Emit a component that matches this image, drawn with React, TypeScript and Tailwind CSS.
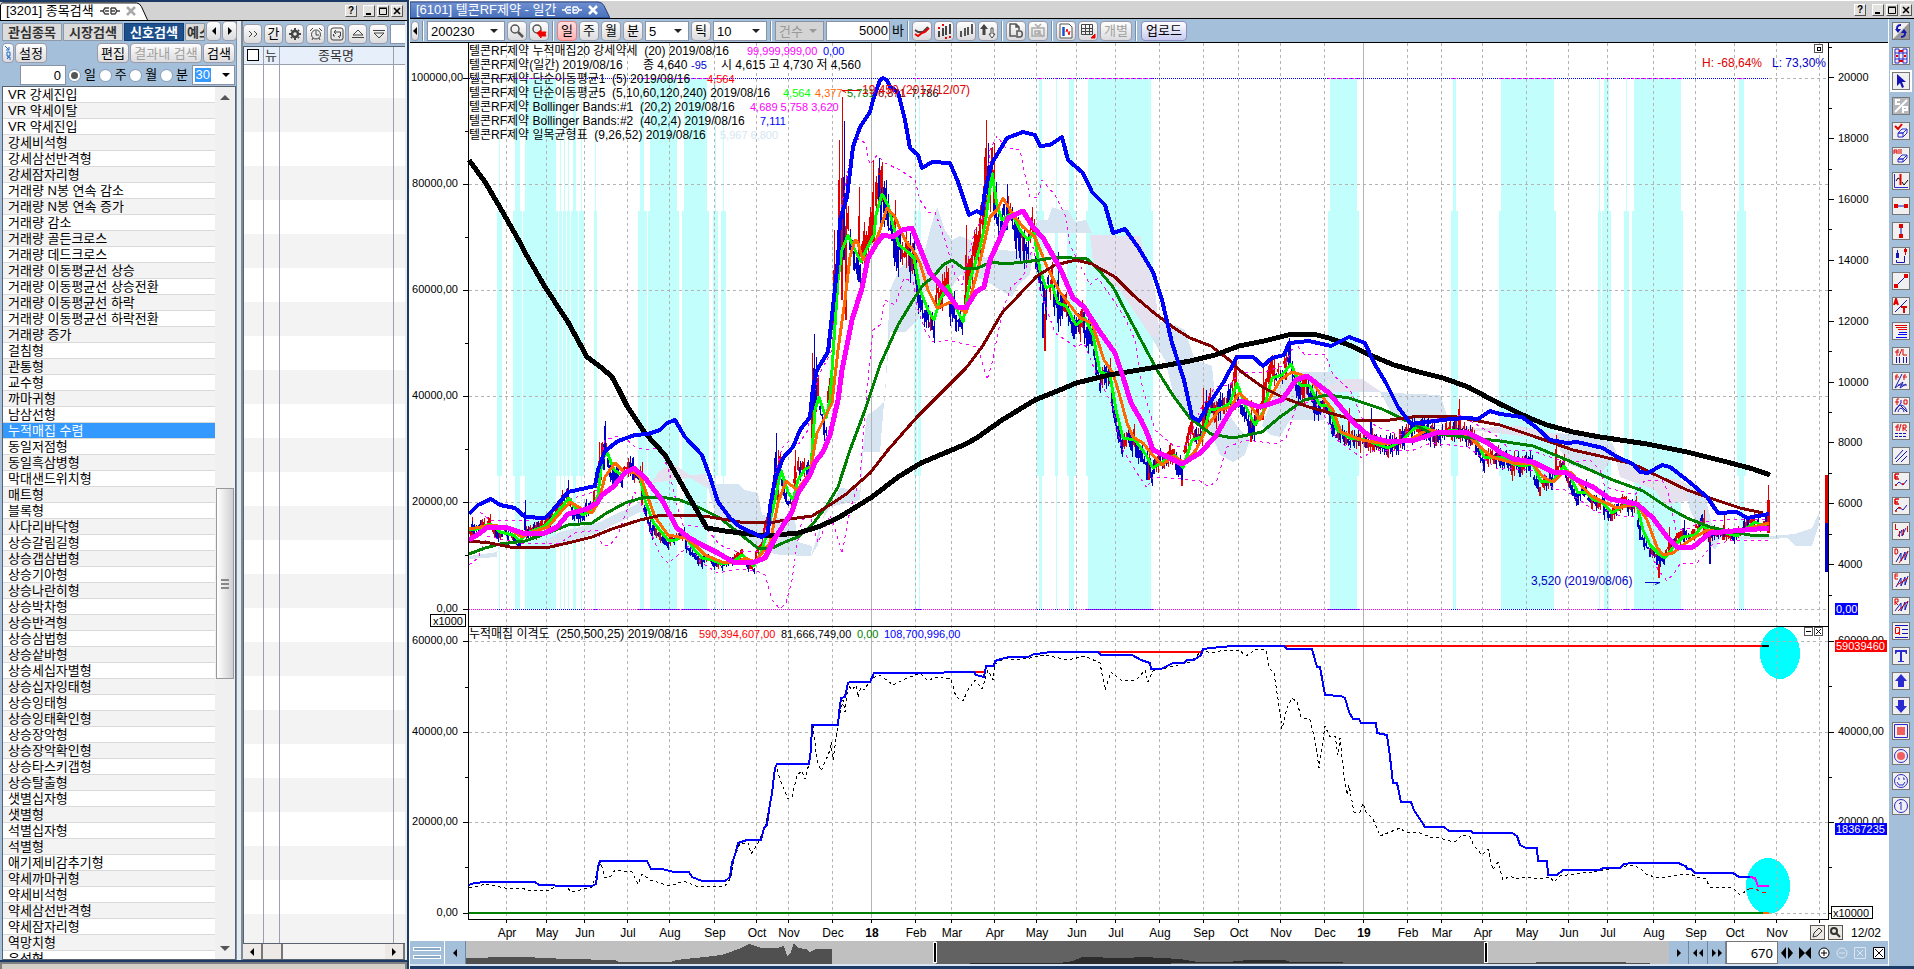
import type { ReactNode } from 'react'

const FONT = "font-['Liberation_Sans','Noto_Sans_CJK_KR',sans-serif]"

const SIGNALS = [
  'VR 강세진입', 'VR 약세이탈', 'VR 약세진입', '강세비석형', '강세삼선반격형', '강세잠자리형',
  '거래량 N봉 연속 감소', '거래량 N봉 연속 증가', '거래량 감소', '거래량 골든크로스', '거래량 데드크로스',
  '거래량 이동평균선 상승', '거래량 이동평균선 상승전환', '거래량 이동평균선 하락', '거래량 이동평균선 하락전환',
  '거래량 증가', '걸침형', '관통형', '교수형', '까마귀형', '남삼선형', '누적매집 수렴', '동일저점형',
  '동일흑삼병형', '막대샌드위치형', '매트형', '블록형', '사다리바닥형', '상승갈림길형', '상승갭삼법형',
  '상승기아형', '상승나란히형', '상승박차형', '상승반격형', '상승삼법형', '상승샅바형', '상승세십자별형',
  '상승십자잉태형', '상승잉태형', '상승잉태확인형', '상승장악형', '상승장악확인형', '상승타스키갭형',
  '상승탈출형', '샛별십자형', '샛별형', '석별십자형', '석별형', '애기제비감추기형', '약세까마귀형',
  '약세비석형', '약세삼선반격형', '약세잠자리형', '역망치형', '유성형',
]

const MONTHS: [number, string][] = [
  [506, 'Apr'], [546, 'May'], [584, 'Jun'], [627, 'Jul'], [669, 'Aug'], [714, 'Sep'], [756, 'Oct'], [788, 'Nov'],
  [832, 'Dec'], [871, '18'], [915, 'Feb'], [951, 'Mar'], [994, 'Apr'], [1036, 'May'], [1076, 'Jun'], [1115, 'Jul'],
  [1159, 'Aug'], [1203, 'Sep'], [1238, 'Oct'], [1280, 'Nov'], [1324, 'Dec'], [1363, '19'], [1407, 'Feb'],
  [1441, 'Mar'], [1482, 'Apr'], [1526, 'May'], [1568, 'Jun'], [1607, 'Jul'], [1653, 'Aug'], [1695, 'Sep'],
  [1734, 'Oct'], [1776, 'Nov'], [1819, ''],
]

// signal zones: narrow start, narrow end, wide start, wide end
const ZONES = [
  [499, 500, 497, 502], [515, 520, 513, 522], [525, 556, 523, 558], [560, 561, 559, 562], [564, 565, 563, 566],
  [568, 569, 567, 570], [573, 576, 571, 578], [581, 582, 579, 584], [595, 596, 594, 597], [640, 644, 638, 647],
  [650, 677, 648, 679], [684, 707, 682, 709], [715, 716, 713, 718], [723, 724, 721, 726], [915, 916, 914, 917],
  [919, 920, 918, 921], [1039, 1042, 1037, 1044], [1056, 1057, 1055, 1058], [1069, 1074, 1067, 1076],
  [1088, 1151, 1086, 1153], [1330, 1357, 1328, 1359], [1453, 1456, 1451, 1458], [1501, 1554, 1499, 1556],
  [1599, 1600, 1598, 1601], [1604, 1609, 1602, 1611], [1626, 1627, 1624, 1629], [1634, 1681, 1632, 1683],
  [1739, 1744, 1737, 1746],
]

const CLOUD_UP = [
  '469,556 497,552 500,546 540,543 560,532 600,522 645,500 646,512 640,512 597,533 560,545 520,544 498,547 497,557 469,559',
  '706,480 715,484 738,484 745,490 758,493 762,515 795,520 798,542 812,546 811,556 780,555 757,550 735,530 715,513',
  '811,556 818,545 822,520 832,505 840,488 860,490 862,455 867,415 875,410 885,400 888,330 890,290 900,268 915,255 925,250 930,230 937,207 945,230 952,240 960,236 975,242 985,258 1000,250 1033,252 1030,275 1018,285 1012,297 1000,290 985,280 960,275 950,290 925,290 918,320 905,332 890,332 885,390 880,452 863,452 860,500 838,505 826,508',
  '1037,220 1048,220 1052,207 1060,210 1068,210 1075,222 1086,220 1092,233 1036,233',
  '1150,335 1160,322 1175,325 1185,330 1195,360 1212,366 1215,395 1240,430 1250,440 1245,455 1233,462 1220,455 1210,430 1195,420 1175,400 1165,360',
  '1280,380 1300,372 1330,372 1345,382 1370,390 1392,393 1440,395 1448,418 1400,422 1390,410 1380,392 1330,392 1325,420 1290,420 1280,437 1270,435 1262,425',
  '1555,433 1585,435 1612,443 1615,455 1600,475 1570,465 1560,450',
  '1683,482 1705,495 1712,525 1722,535 1715,550 1705,540 1690,510',
  '1715,537 1770,536 1795,534 1812,528 1819,513 1819,525 1812,546 1795,546 1788,538 1770,539 1716,539',
]

const CLOUD_DOWN = [
  '652,483 658,472 672,463 690,475 706,474 708,488 690,478',
  '1090,235 1140,236 1145,255 1155,290 1160,337 1150,335 1120,290 1100,275 1093,262',
  '1328,386 1345,379 1362,379 1380,391 1328,392',
  '1420,424 1480,428 1520,426 1555,434 1560,445 1530,437 1480,431',
  '1612,443 1620,460 1655,476 1684,481 1690,500 1665,505 1655,490 1620,477',
]

const MA240 = '469,160 485,182 498,204 518,239 527,256 545,287 568,322 587,357 602,368 612,377 618,388 627,406 645,433 665,455 685,490 707,528 725,531 765,536 798,533 818,527 838,518 872,497 898,477 921,463 966,444 978,437 1002,420 1035,400 1060,390 1076,383 1109,375 1157,367 1190,361 1215,355 1239,346 1264,341 1288,335 1313,334 1329,338 1349,345 1370,355 1394,365 1419,372 1443,378 1468,387 1500,404 1527,417 1547,425 1573,432 1600,437 1647,444 1687,452 1727,462 1753,469 1770,475'
const MA120 = '469,541 490,543 510,547 530,548 550,547 572,542 592,537 612,529 640,520 662,515 685,515 710,517 740,522 770,523 790,519 812,516 825,508 845,495 870,473 888,450 917,417 966,368 982,347 1002,313 1019,295 1037,276 1055,265 1076,260 1092,264 1115,277 1133,295 1153,312 1174,328 1190,338 1211,346 1227,358 1243,373 1264,388 1284,398 1309,407 1337,415 1358,421 1390,420 1419,416 1451,416 1500,425 1527,434 1553,443 1573,450 1600,456 1633,464 1660,477 1687,490 1713,499 1740,508 1763,513'
const MA60 = '469,554 485,548 500,544 525,541 548,533 568,525 592,523 605,514 625,503 645,497 660,497 680,500 700,508 720,518 735,530 750,542 758,548 770,549 785,542 798,537 812,525 826,507 838,487 850,450 865,410 880,365 898,325 915,297 923,285 933,277 943,265 952,260 963,268 975,269 992,262 1005,264 1023,262 1040,260 1057,257 1087,259 1097,268 1113,287 1125,310 1141,340 1157,370 1174,397 1190,418 1211,434 1233,438 1262,432 1280,417 1304,400 1327,395 1349,398 1382,409 1411,423 1431,433 1464,437 1500,441 1533,446 1560,457 1583,467 1613,480 1643,491 1667,507 1687,518 1710,527 1733,532 1750,535 1769,535'
const BB40 = '469,514 478,505 491,499 500,505 515,508 525,517 545,518 553,510 568,492 595,486 598,470 605,451 618,441 635,435 648,434 660,430 667,423 675,420 685,437 702,455 710,477 718,502 730,518 740,527 762,537 768,533 770,507 775,480 783,458 793,447 800,430 810,417 813,387 817,370 828,352 833,307 838,260 840,220 847,197 853,147 860,127 870,112 873,100 880,80 883,78 887,80 890,87 898,92 905,120 910,148 918,155 922,168 932,162 950,163 958,182 969,215 977,211 982,214 985,190 992,163 1007,138 1023,132 1035,135 1040,146 1050,145 1062,137 1068,160 1083,173 1092,192 1105,205 1113,233 1125,229 1138,247 1153,272 1162,300 1172,343 1184,380 1192,417 1199,421 1207,407 1223,383 1237,357 1253,357 1263,366 1272,358 1284,355 1289,343 1309,341 1331,346 1349,337 1365,343 1374,363 1386,383 1398,407 1411,424 1451,419 1468,418 1478,419 1490,411 1500,414 1522,417 1537,428 1550,440 1567,443 1577,442 1603,448 1617,457 1633,464 1640,472 1648,473 1662,465 1670,467 1687,480 1707,497 1718,513 1737,512 1747,518 1769,514'
const MA20 = '469,540 477,535 488,527 508,528 522,533 545,533 557,527 568,514 587,509 597,503 602,495 613,487 625,473 634,468 645,478 662,500 677,528 688,537 702,545 718,553 733,562 755,562 765,558 775,538 792,512 798,493 810,475 815,462 823,452 830,435 838,400 842,370 852,320 862,288 868,258 877,243 883,235 893,237 902,230 912,228 920,248 930,273 949,295 957,307 966,308 976,292 984,287 990,260 1000,238 1008,218 1023,211 1033,227 1043,238 1060,268 1073,298 1084,307 1100,332 1115,353 1123,377 1131,403 1141,420 1147,433 1153,450 1166,456 1182,464 1200,453 1215,437 1231,410 1241,401 1260,407 1282,400 1296,380 1307,376 1329,393 1353,422 1370,437 1390,442 1415,440 1439,432 1468,433 1488,443 1500,452 1513,459 1533,462 1553,472 1567,473 1577,480 1593,487 1610,499 1637,504 1653,518 1667,537 1677,547 1693,547 1710,533 1733,531 1769,528'
const MA10 = '469,529 492,525 508,528 522,537 535,531 548,527 560,513 570,502 582,509 592,513 598,503 605,477 615,463 625,473 635,472 642,480 648,498 655,517 668,535 685,538 695,545 705,555 722,562 735,563 745,558 755,562 770,543 778,503 786,481 797,490 810,473 817,433 832,403 838,350 845,300 850,257 855,240 858,243 863,260 872,252 880,230 887,208 895,217 905,240 913,250 920,263 928,290 937,308 951,302 966,313 976,277 982,253 990,217 997,210 1003,198 1012,213 1023,227 1035,237 1047,267 1060,292 1072,308 1080,318 1092,323 1104,360 1113,373 1119,393 1127,423 1133,437 1143,443 1151,453 1162,465 1174,456 1184,463 1196,450 1207,427 1219,410 1231,407 1239,393 1247,400 1260,420 1270,398 1280,380 1292,372 1309,377 1321,395 1333,410 1341,432 1362,440 1386,444 1411,439 1427,430 1443,432 1468,435 1480,447 1492,457 1513,463 1533,464 1543,477 1553,482 1565,471 1572,473 1582,487 1593,497 1617,508 1637,504 1647,520 1657,547 1663,555 1673,553 1687,542 1707,530 1733,533 1753,527 1769,523'
const MA5 = '469,530 477,529 490,524 500,532 513,535 520,541 527,533 545,526 555,515 569,498 575,508 583,515 592,510 598,495 602,460 607,452 614,470 622,475 633,468 640,476 645,500 653,522 668,540 675,540 685,536 693,548 702,558 712,560 722,564 733,562 742,555 754,566 762,550 768,530 775,500 781,470 788,492 793,500 798,480 805,469 811,467 815,410 819,397 826,418 830,400 834,340 838,280 842,250 848,235 855,250 861,262 866,250 874,235 876,215 882,194 888,205 893,225 899,245 908,252 914,258 920,290 928,310 934,320 940,300 948,285 957,310 963,322 970,280 980,247 985,225 992,173 997,205 1002,220 1012,213 1020,230 1028,240 1034,233 1040,270 1046,288 1052,285 1058,303 1066,306 1076,325 1085,318 1093,335 1100,372 1110,375 1116,410 1123,438 1135,440 1146,455 1153,468 1165,460 1175,455 1183,468 1192,440 1202,437 1210,410 1222,408 1230,403 1237,383 1245,405 1255,425 1263,412 1272,378 1282,375 1291,364 1300,385 1309,385 1320,405 1328,405 1337,430 1350,438 1365,440 1388,448 1400,442 1415,428 1425,427 1440,435 1450,430 1465,432 1475,437 1484,457 1493,457 1507,458 1513,464 1523,466 1533,464 1541,482 1553,481 1564,466 1571,478 1578,493 1586,492 1594,500 1602,502 1612,513 1625,505 1637,505 1643,530 1650,545 1660,555 1665,558 1675,545 1683,537 1695,535 1703,525 1710,532 1722,532 1737,536 1747,528 1755,522 1763,526 1769,523'
const BB20_UP = '480,512 490,520 525,521 548,516 568,500 590,493 597,490 605,440 618,436 625,438 635,447 645,450 655,448 662,452 670,475 677,505 683,525 705,527 720,545 735,551 760,552 768,520 775,475 782,448 790,440 798,445 808,430 812,400 820,373 832,350 840,215 850,160 857,138 865,143 870,165 877,155 885,163 900,170 915,180 920,200 928,212 935,212 945,240 955,275 962,285 975,230 985,215 990,150 997,136 1005,147 1020,150 1025,175 1030,197 1038,198 1042,180 1055,195 1065,215 1070,245 1080,265 1090,285 1098,278 1112,298 1125,318 1135,340 1142,385 1155,430 1175,447 1187,445 1200,410 1215,387 1230,385 1240,372 1265,372 1285,365 1295,343 1305,355 1325,354 1333,375 1350,390 1362,418 1380,428 1400,435 1430,420 1460,415 1500,438 1510,451 1530,450 1567,463 1590,460 1600,470 1605,487 1635,495 1645,480 1662,480 1668,492 1676,530 1690,528 1700,522 1725,520 1769,519'
const BB20_DN = '469,565 478,558 487,536 520,543 560,543 575,533 597,530 602,545 610,545 618,535 625,515 635,492 640,500 650,530 660,555 668,563 678,555 690,545 700,562 718,573 740,569 757,571 765,575 772,600 780,609 786,603 792,580 797,545 802,520 810,515 818,543 830,515 836,532 842,554 850,510 860,478 866,400 873,330 880,325 885,300 895,305 904,278 913,282 917,307 925,330 933,342 949,340 955,342 978,347 987,380 992,363 1002,313 1011,287 1023,277 1033,247 1040,290 1055,333 1076,347 1084,343 1096,373 1113,407 1121,447 1137,473 1147,488 1153,477 1182,479 1200,481 1209,487 1217,480 1227,447 1247,440 1276,444 1286,438 1296,407 1313,400 1325,417 1337,440 1362,458 1374,450 1411,451 1431,443 1468,447 1496,468 1530,470 1545,475 1553,489 1565,490 1580,500 1597,513 1610,510 1620,516 1640,516 1650,550 1658,570 1667,581 1675,572 1680,564 1697,563 1712,545 1730,541 1769,540'

const GAP_HIGH = '469,885 474,883 486,882 535,882 539,885 571,886 592,886 596,884 598,867 600,861 647,861 651,869 662,869 674,872 689,872 692,877 702,881 725,881 730,877 732,863 735,855 738,843 747,840 761,840 764,828 767,825 769,810 772,793 775,768 777,764 809,764 811,750 812,725 838,725 839,713 841,698 845,697 848,683 850,682 870,682 874,673 915,673 974,672 976,675 984,677 986,666 994,666 995,661 1001,659 1009,657 1028,657 1034,654 1046,653 1048,652 1098,652 1101,655 1132,655 1141,660 1150,663 1151,669 1161,669 1173,663 1184,663 1187,660 1194,660 1201,655 1203,649 1221,647 1234,646 1284,646 1287,649 1312,649 1317,667 1320,667 1325,695 1341,696 1345,698 1349,712 1353,719 1359,719 1361,723 1376,723 1377,733 1387,735 1390,757 1393,783 1397,783 1401,802 1411,802 1414,810 1425,827 1444,827 1449,831 1471,831 1473,833 1512,833 1517,836 1520,845 1526,848 1537,848 1538,861 1547,861 1548,875 1557,875 1563,870 1600,870 1603,868 1620,868 1624,864 1633,863 1679,863 1682,865 1686,866 1687,869 1691,869 1695,873 1733,873 1739,877 1750,877'
const GAP_RAW = '469,888 475,887 485,884 495,886 505,888 522,888 527,890 547,891 555,887 565,886 572,892 580,890 592,887 598,870 601,863 605,878 611,876 615,870 632,872 638,884 642,874 650,880 670,886 684,881 698,887 725,886 731,878 735,856 740,843 748,843 751,854 757,845 764,830 770,805 776,766 781,782 788,799 792,797 797,775 802,771 805,779 810,760 813,726 817,760 821,771 826,760 830,750 831,742 833,760 838,725 843,700 845,712 848,685 852,690 856,685 858,697 861,687 864,690 872,678 880,675 893,685 905,679 920,673 928,681 935,677 951,679 956,697 963,701 968,690 975,680 982,689 988,670 993,680 995,664 1005,658 1012,660 1030,658 1045,655 1068,660 1085,656 1100,663 1105,690 1111,672 1122,681 1136,680 1145,670 1148,682 1153,671 1170,667 1190,662 1203,650 1210,653 1225,650 1239,650 1246,656 1257,649 1266,650 1269,668 1274,673 1280,712 1282,729 1287,708 1292,698 1297,702 1301,717 1310,720 1315,740 1319,768 1325,726 1330,737 1335,736 1338,755 1340,738 1344,775 1347,795 1349,785 1354,812 1360,812 1363,803 1366,812 1373,819 1380,836 1400,828 1405,832 1420,833 1430,837 1440,838 1450,841 1456,841 1462,835 1470,837 1474,846 1482,855 1488,849 1493,870 1498,862 1503,880 1510,876 1516,879 1527,877 1538,879 1550,877 1554,882 1560,876 1575,874 1600,871 1620,867 1632,865 1640,868 1646,874 1657,878 1680,875 1690,874 1700,878 1705,878 1710,887 1733,888 1740,895 1749,889'

// x, high, low, up?
const SPIKES: [number, number, number, boolean][] = [
  [525, 500, 530, false], [472, 517, 535, true], [568, 480, 500, false], [605, 421, 452, false], [604, 426, 470, false],
  [599, 442, 490, true], [601, 445, 480, true], [633, 457, 480, false], [642, 462, 505, true], [774, 458, 500, false],
  [776, 433, 480, false], [778, 450, 500, true], [812, 353, 440, true], [814, 334, 420, false], [816, 357, 410, false],
  [795, 450, 490, true], [834, 230, 330, true], [839, 140, 240, true], [842, 97, 300, true], [844, 121, 260, false],
  [846, 175, 320, true], [859, 187, 260, true], [873, 160, 240, true], [879, 158, 200, false], [881, 170, 230, false],
  [886, 180, 220, false], [895, 200, 250, true], [966, 225, 300, true], [984, 157, 230, true], [986, 120, 190, true],
  [988, 143, 200, false], [994, 143, 210, true], [1007, 184, 230, false], [1043, 280, 338, false], [1045, 290, 351, true],
  [1058, 252, 323, false], [1147, 450, 480, false], [1149, 445, 480, true], [1180, 455, 475, false], [1182, 460, 486, true],
  [1203, 388, 430, true], [1206, 390, 420, false], [1235, 355, 410, true], [1251, 400, 442, true], [1263, 365, 420, true],
  [1286, 345, 380, true], [1289, 338, 365, false], [1371, 408, 440, false], [1349, 408, 440, true], [1459, 399, 425, true],
  [1556, 435, 470, true], [1520, 460, 477, false], [1604, 490, 510, false], [1612, 505, 521, true], [1640, 515, 540, false],
  [1657, 550, 565, false], [1659, 555, 578, true], [1669, 527, 550, true], [1684, 520, 540, false], [1704, 510, 530, true],
  [1710, 528, 564, false], [1724, 515, 540, true],
]

function parse(points: string) {
  return points.split(' ').map(p => p.split(',').map(Number))
}

// daily bars spread round the five day average
function buildBars() {
  const pts = parse(MA5)
  let seed = 7
  const rnd = () => {
    seed = (seed * 16807) % 2147483647
    return seed / 2147483647
  }
  const out = { upWick: '', upBody: '', dnWick: '', dnBody: '' }
  let k = 0
  for (let x = 470; x < 1768; x += 2) {
    while (k < pts.length - 2 && pts[k + 1][0] < x) k++
    const [x0, y0] = pts[k]
    const [x1, y1] = pts[k + 1]
    const slope = (y1 - y0) / (x1 - x0)
    const lead = Math.max(-12, Math.min(12, slope * 4))
    const y = y0 + slope * (x - x0) + lead
    const amp = 2 + (609 - y) * 0.04
    const up = slope * 0.5 + (rnd() - 0.5) * 2.4 < 0
    const mid = y + (rnd() - 0.5) * amp
    const body = 1 + rnd() * amp * 0.8
    const top = Math.round(mid - body)
    const bottom = Math.round(mid + body)
    const hi = Math.round(top - rnd() * amp * 0.8)
    const lo = Math.round(bottom + rnd() * amp * 0.8)
    if (up) {
      out.upWick += `M${x}.5 ${hi}V${lo}`
      out.upBody += `M${x} ${top}V${bottom}`
    } else {
      out.dnWick += `M${x}.5 ${hi}V${lo}`
      out.dnBody += `M${x} ${top}V${bottom}`
    }
  }
  SPIKES.forEach(([x, hi, lo, up]) => {
    const third = Math.round(hi + (lo - hi) * 0.4)
    if (up) {
      out.upWick += `M${x}.5 ${hi}V${lo}`
      out.upBody += `M${x} ${third}V${lo}`
    } else {
      out.dnWick += `M${x}.5 ${hi}V${lo}`
      out.dnBody += `M${x} ${third}V${lo}`
    }
  })
  return out
}

const BARS = buildBars()

type Seg = [number, string, string]

const LEGEND: Seg[][] = [
  [[469, '#000', '텔콘RF제약 누적매집20 강세약세  (20) 2019/08/16'], [747, '#f0f', '99,999,999,00'], [823, '#00f', '0,00']],
  [[469, '#000', '텔콘RF제약(일간) 2019/08/16'], [643, '#000', '종 4,640'], [691, '#0000d8', '-95'], [721, '#000', '시 4,615 고 4,730 저 4,560']],
  [[469, '#000', '텔콘RF제약 단순이동평균1  (5) 2019/08/16'], [707, '#f00', '4,564']],
  [[469, '#000', '텔콘RF제약 단순이동평균5  (5,10,60,120,240) 2019/08/16'], [783, '#0f0', '4,564'], [815, '#ff6600', '4,377'], [847, '#008000', '5,731'], [878, '#800000', '6,871'], [911, '#000', '7,786']],
  [[469, '#000', '텔콘RF제약 Bollinger Bands:#1  (20,2) 2019/08/16'], [750, '#f0f', '4,689 5,758 3,620']],
  [[469, '#000', '텔콘RF제약 Bollinger Bands:#2  (40,2,4) 2019/08/16'], [760, '#00f', '7,111']],
  [[469, '#000', '텔콘RF제약 일목균형표  (9,26,52) 2019/08/16'], [720, '#d6e6f2', '5,967 6,800']],
]

const LEGEND2: Seg[] = [
  [469, '#000', '누적매집 이격도  (250,500,25) 2019/08/16'], [699, '#f00', '590,394,607,00'], [781, '#000', '81,666,749,00'],
  [857, '#008000', '0,00'], [884, '#00f', '108,700,996,00'],
]

const LEFT_AXIS: [number, string][] = [
  [78, '100000,00'], [184, '80000,00'], [290, '60000,00'], [396, '40000,00'], [502, '20000,00'], [609, '0,00'],
]
const LOWER_AXIS: [number, string][] = [[641, '60000,00'], [732, '40000,00'], [822, '20000,00'], [913, '0,00']]
const RIGHT_AXIS: [number, string][] = [
  [77, '20000'], [138, '18000'], [199, '16000'], [260, '14000'], [321, '12000'], [382, '10000'], [442, '8000'],
  [503, '6000'], [564, '4000'],
]

// names are set a size larger than the bare values
function LegendText({ seg: [x, fill, t], y }: { seg: Seg; y: number }) {
  return <text x={x} y={y} fill={fill} fontSize={/[가-힣]/.test(t) ? 12 : 11} className="whitespace-pre">{t}</text>
}

function Chart() {
  return (
    <svg viewBox="410 43 1478 898" className={`block h-full w-full bg-white ${FONT}`} fontSize="11" role="img" aria-label="텔콘RF제약 일간 차트">
      <g shapeRendering="crispEdges">
        {ZONES.map(([a, b, c, d]) => (
          <g key={a} fill="#c2fffc">
            <rect x={a} y="79" width={b - a} height="530" />
            <rect x={c} y="211" width={d - c} height="265" />
          </g>
        ))}
        <g fill="#d6e5f1">
          {CLOUD_UP.map(p => <polygon key={p} points={p} />)}
        </g>
        <g fill="#e6e1ee">
          {CLOUD_DOWN.map(p => <polygon key={p} points={p} />)}
        </g>
        <ellipse cx="1780" cy="653" rx="20" ry="26" fill="#0ff" />
        <ellipse cx="1768" cy="886" rx="22" ry="28" fill="#0ff" />

        {/* Grid */}
        <g stroke="#b4b4b4" strokeDasharray="3 3">
          {MONTHS.map(([x, name]) => (
            <path key={x} d={`M${x}.5 43V918`} strokeDasharray={name === '18' || name === '19' ? 'none' : '3 3'} />
          ))}
          {[184, 290, 396, 502, 641, 732, 822].map(y => <path key={y} d={`M469 ${y}.5H1828`} />)}
          <path d="M1769 78.5H1828M1769 609.5H1828M1769 913.5H1828" />
        </g>
        <path d="M469 78.5H1769" stroke="#00f" strokeDasharray="1 1" />
        <path d="M469 609.5H1769" stroke="#f0f" strokeDasharray="1 1" />
        {ZONES.map(([a, , c, d]) => (
          <g key={a}>
            <path d={`M${c} 78.5H${d}`} stroke="#f0f" strokeDasharray="2 1" />
            <path d={`M${c} 609.5H${d}`} stroke="#00f" strokeDasharray="1 1" />
          </g>
        ))}

        {/* Price bars */}
        <g fill="none">
          <path d={BARS.upWick} stroke="#e00000" />
          <path d={BARS.dnWick} stroke="#0000c8" />
          <path d={BARS.upBody} stroke="#e00000" strokeWidth="2" />
          <path d={BARS.dnBody} stroke="#0000c8" strokeWidth="2" />
          <path d="M1768.5 485V533" stroke="#e00000" />
          <path d="M1768.5 500V533" stroke="#e00000" strokeWidth="3" />
        </g>

        {/* Averages and bands */}
        <g fill="none" strokeLinejoin="round">
          <polyline points={BB20_UP} stroke="#f0f" strokeDasharray="3 4" />
          <polyline points={BB20_DN} stroke="#f0f" strokeDasharray="3 4" />
          <polyline points={MA5} stroke="#0f0" strokeWidth="3" />
          <polyline points={MA10} stroke="#ff6a00" strokeWidth="3" />
          <polyline points={MA60} stroke="#008000" strokeWidth="3" />
          <polyline points={MA120} stroke="#800000" strokeWidth="3" />
          <polyline points={MA240} stroke="#000" strokeWidth="5" />
          <polyline points={BB40} stroke="#00f" strokeWidth="4" />
          <polyline points={MA20} stroke="#f0f" strokeWidth="5" />
        </g>

        {/* Accumulation panel */}
        <g fill="none">
          <polyline points={GAP_RAW} stroke="#000" strokeDasharray="3 3" />
          <polyline points="1749,889 1755,888 1760,892 1768,892" stroke="#f00" strokeDasharray="4 3" />
          <path d="M974 672H985M1098 652H1202M1284 646H1762" stroke="#f00" strokeWidth="2" />
          <path d="M1762 646H1769" stroke="#000" strokeWidth="2" />
          <polyline points={GAP_HIGH} stroke="#00f" strokeWidth="2" />
          <polyline points="1750,877 1755,878 1758,886 1769,886" stroke="#f0f" strokeWidth="2" />
          <path d="M469 913H1765" stroke="#008000" strokeWidth="2" />
          <path d="M1763 913H1769" stroke="#ff6a00" strokeWidth="2" />
        </g>

        {/* Frame and ticks */}
        <g stroke="#000" fill="none">
          <path d="M468.5 43V919.5H1828.5V43M468 626.5H1829" />
          {LEFT_AXIS.map(([y]) => <path key={y} d={`M463 ${y}.5H468`} />)}
          {LOWER_AXIS.map(([y]) => <path key={y} d={`M463 ${y}.5H468M1829 ${y}.5H1834`} />)}
          {[131, 237, 343, 449, 555, 687, 777, 867].map(y => <path key={y} d={`M465 ${y}.5H468`} />)}
          {RIGHT_AXIS.map(([y]) => <path key={y} d={`M1829 ${y}.5H1834`} />)}
          {[47, 108, 169, 229, 290, 351, 412, 473, 534, 595, 686, 777, 867].map(y => <path key={y} d={`M1829 ${y}.5H1832`} />)}
          {MONTHS.map(([x]) => <path key={x} d={`M${x}.5 919V923`} />)}
        </g>
        <path d="M1825 475h3v48h-3z" fill="#e00000" />
        <path d="M1825 523h3v49h-3z" fill="#0000c8" />
      </g>

      <g textAnchor="end">
        {LEFT_AXIS.map(([y, t]) => <text key={t} x={t.length > 8 ? 463 : 458} y={y + 3}>{t}</text>)}
        {LOWER_AXIS.map(([y, t]) => <text key={t} x="458" y={y + 3}>{t}</text>)}
      </g>
      {RIGHT_AXIS.map(([y, t]) => <text key={t} x="1838" y={y + 4}>{t}</text>)}
      {LOWER_AXIS.slice(0, 3).map(([y, t]) => <text key={t} x="1838" y={y + 3}>{t}</text>)}
      <g textAnchor="middle" fontSize="12">
        {MONTHS.map(([x, t]) => (
          <text key={x} x={x + 1} y="937" fontWeight={t === '18' || t === '19' ? 700 : 400}>{t}</text>
        ))}
      </g>
      <text x="1851" y="937" fontSize="12">12/02</text>

      {LEGEND.map((row, i) => row.map(seg => <LegendText key={seg[0]} seg={seg} y={55 + i * 14} />))}
      {LEGEND2.map(seg => <LegendText key={seg[0]} seg={seg} y={638} />)}
      <g fontSize="12">
        <text x="1702" y="67" fill="#e00000">H: -68,64%</text>
        <text x="1772" y="67" fill="#0000c8">L: 73,30%</text>
        <text x="862" y="94" fill="#e00000">19,450 (2017/12/07)</text>
        <text x="1531" y="585" fill="#0000c8">3,520 (2019/08/06)</text>
      </g>
      <path d="M842 90.5H860M842 90.5l4 2" stroke="#e00000" fill="none" />
      <path d="M1645 582.5H1660l-5 2" stroke="#0000c8" fill="none" />

      {/* Value tags */}
      <g fill="#fff">
        <rect x="1835" y="603" width="23" height="12" fill="#00f" />
        <text x="1836" y="613">0,00</text>
        <rect x="1835" y="640" width="52" height="12" fill="#f00" />
        <text x="1836" y="650">59039460</text>
        <rect x="1835" y="823" width="52" height="12" fill="#00f" />
        <text x="1836" y="833">18367235</text>
      </g>
      <g fill="#fff" stroke="#000" shapeRendering="crispEdges">
        <rect x="430.5" y="614.5" width="35" height="12" />
        <rect x="1831.5" y="906.5" width="41" height="12" />
      </g>
      <text x="433" y="625">x1000</text>
      <text x="1833" y="917">x10000</text>

      {/* Panel buttons */}
      <g fill="#fff" stroke="#555" shapeRendering="crispEdges">
        <rect x="1814.5" y="44.5" width="8" height="8" />
        <rect x="1817.5" y="47.5" width="3" height="3" stroke="#000" />
        <rect x="1804.5" y="627.5" width="8" height="8" />
        <path d="M1806 631.5h5" stroke="#000" />
        <rect x="1814.5" y="627.5" width="8" height="8" />
        <path d="M1816 629l5 5M1821 629l-5 5" stroke="#000" />
        <rect x="1810.5" y="925.5" width="14" height="14" fill="#ece9e4" />
        <rect x="1828.5" y="925.5" width="14" height="14" fill="#ece9e4" />
      </g>
      <path d="M1813 937l1-4 5-5 3 3-5 5z" fill="none" stroke="#333" />
      <circle cx="1834" cy="931" r="3" fill="none" stroke="#333" strokeWidth="2" />
      <path d="M1836 933l4 4" stroke="#333" strokeWidth="2" />
    </svg>
  )
}

const BTN = 'flex h-5 shrink-0 items-center justify-center rounded-sm border border-[#9a9aa8] bg-linear-to-b from-white via-[#ececec] to-[#dcdce0] leading-none disabled:text-[#a0a0a0]'

function Btn({ label, className = 'w-5', disabled, children }: { label?: string; className?: string; disabled?: boolean; children: ReactNode }) {
  return (
    <button type="button" aria-label={label} disabled={disabled} className={`${BTN} ${className}`}>
      {children}
    </button>
  )
}

function Combo({ label, value, className, disabled }: { label: string; value: string; className: string; disabled?: boolean }) {
  return (
    <div className={`relative flex h-5 shrink-0 items-center border border-[#8a93a5] ${disabled ? 'bg-[#d4d4d4]' : 'bg-white'} ${className}`}>
      <select aria-label={label} disabled={disabled} className={`h-full w-full appearance-none bg-transparent pl-[3px] outline-none ${disabled ? 'text-[#999]' : 'text-black'}`}>
        <option>{value}</option>
      </select>
      <svg viewBox="0 0 8 4" className={`pointer-events-none absolute right-1.5 h-1 w-2 ${disabled ? 'fill-[#999]' : 'fill-[#222]'}`}><path d="M0 0h8L4 4z" /></svg>
    </div>
  )
}

function Sep() {
  return <span className="mx-px h-5 w-0.5 shrink-0 border-r border-white bg-[#7d8ea3]" />
}

function LinkIcon({ color }: { color: string }) {
  return (
    <svg viewBox="0 0 20 10" className="h-2.5 w-5" fill="none" stroke={color} strokeWidth="1.4">
      <path d="M0 5h3M9 2H5L3 5l2 3h4M5 5h4M20 5h-3M11 2h4l2 3-2 3h-4M15 5h-4M11 2v6" />
    </svg>
  )
}

function WindowButtons() {
  const base = 'flex h-3 w-3 items-center justify-center border border-t-white border-l-white border-r-[#555] border-b-[#555] bg-[#e4e2de]'
  return (
    <div className="flex items-center gap-0.5">
      <button type="button" aria-label="도움말" className={`${base} mr-1 text-[10px] font-bold leading-none`}>?</button>
      <button type="button" aria-label="최소화" className={base}><svg viewBox="0 0 8 8" className="h-2 w-2"><path d="M1 6h5v2H1z" /></svg></button>
      <button type="button" aria-label="최대화" className={base}><svg viewBox="0 0 8 8" className="h-2 w-2" fill="none" stroke="#000"><path d="M.5 1.5h7v6h-7zM0 1h8" /></svg></button>
      <button type="button" aria-label="닫기" className={base}><svg viewBox="0 0 8 8" className="h-2 w-2" stroke="#000" strokeWidth="1.6"><path d="M1 1l6 6M7 1L1 7" /></svg></button>
    </div>
  )
}

function Tri({ dir }: { dir: 'left' | 'right' }) {
  return <svg viewBox="0 0 6 8" className="h-2 w-1.5"><path d={dir === 'left' ? 'M5 0v8L1 4z' : 'M1 0v8l4-4z'} /></svg>
}

function SearchPane() {
  return (
    <section className="flex w-[237px] shrink-0 flex-col border-r border-[#6e93b8] bg-[#a4bfd9] pl-0.5">
      <div className="flex h-[21px] items-end gap-px pb-px text-[13px] font-bold">
        <button type="button" className="h-[18px] w-[60px] shrink-0 border border-[#8f9aa8] bg-[#dcdcdc] leading-none text-[#333]">관심종목</button>
        <button type="button" className="h-[18px] w-[60px] shrink-0 border border-[#8f9aa8] bg-[#dcdcdc] leading-none text-[#333]">시장검색</button>
        <button type="button" className="h-[18px] w-[60px] shrink-0 border border-[#123c74] bg-[#1c4f8c] leading-none text-white">신호검색</button>
        <button type="button" className="h-[18px] w-5 shrink-0 overflow-hidden border border-[#8f9aa8] bg-[#dcdcdc] pl-px text-left leading-none whitespace-nowrap text-[#333]">예스</button>
        <Btn label="이전 탭" className="w-[15px]"><Tri dir="left" /></Btn>
        <Btn label="다음 탭" className="w-[15px]"><Tri dir="right" /></Btn>
      </div>
      <div className="flex h-[22px] items-center gap-px text-[13px]">
        <Btn label="접기" className="w-3">
          <svg viewBox="0 0 8 16" className="h-4 w-2" fill="none" stroke="#1d6fd0"><path d="M1 1l4 4M5 2v3H2M3 7h3v4H3zM3 14l2-2M3 12h3v3" /></svg>
        </Btn>
        <Btn className="w-8">설정</Btn>
        <Btn className="ml-auto w-8">편집</Btn>
        <Btn className="w-[72px]" disabled>결과내 검색</Btn>
        <Btn className="mr-px w-8">검색</Btn>
      </div>
      <div className="flex h-[22px] items-center gap-0.5 pr-px pl-[18px] text-[13px]">
        <input aria-label="봉 전" defaultValue="0" className="mr-px h-5 w-[46px] border border-[#8a93a5] bg-white pr-1 text-right outline-none" />
        {['일', '주', '월', '분'].map((t, i) => (
          <label key={t} className="flex w-[29px] items-center gap-1">
            <input type="radio" name="period" defaultChecked={i === 0} className="h-[11px] w-[11px] shrink-0 appearance-none rounded-full border-2 border-white bg-white ring-1 ring-[#8da3bb] checked:bg-[#555]" />
            {t}
          </label>
        ))}
        <div className="relative ml-auto flex h-5 w-11 items-center border border-[#8a93a5] bg-white">
          <select aria-label="분 단위" className="h-full w-full appearance-none pl-0.5 text-white outline-none">
            <option>30</option>
          </select>
          <span aria-hidden="true" className="pointer-events-none absolute left-0.5 bg-[#3399ff] px-px leading-3.5 text-white">30</span>
          <svg viewBox="0 0 8 4" className="pointer-events-none absolute right-1 h-1 w-2"><path d="M0 0h8L4 4z" /></svg>
        </div>
      </div>
      <div className="flex min-h-0 flex-1 border border-[#59636f] bg-white">
        <ul className="min-w-0 flex-1 overflow-hidden text-[13px]">
          {SIGNALS.map((name, i) => (
            <li key={name} className={`h-4 border-b border-[#d9d9d9] ${i === 21 ? 'bg-[#3399ff] text-white' : i % 2 ? 'bg-[#f3f3f3]' : 'bg-white'}`}>
              <button type="button" className="block h-full w-full pl-[5px] text-left leading-[14px] whitespace-nowrap">{name}</button>
            </li>
          ))}
        </ul>
        <div className="flex w-5 flex-col items-center bg-[#f0f0f0]">
          <svg viewBox="0 0 10 5" className="mt-2 h-[5px] w-2.5 shrink-0 fill-[#555]"><path d="M5 0l5 5H0z" /></svg>
          <div className="flex-[390_1_0%]" />
          <div className="flex min-h-0 w-[18px] flex-[190_1_0%] flex-col items-center justify-center gap-0.5 border border-[#999] bg-linear-to-r from-white to-[#cfd0d4]">
            <span className="h-0.5 w-2 bg-[#888]" /><span className="h-0.5 w-2 bg-[#888]" /><span className="h-0.5 w-2 bg-[#888]" />
          </div>
          <div className="flex-[268_1_0%]" />
          <svg viewBox="0 0 10 5" className="mb-2 h-[5px] w-2.5 shrink-0 fill-[#555]"><path d="M0 0h10L5 5z" /></svg>
        </div>
      </div>
    </section>
  )
}

function ResultPane() {
  const icon = 'h-3.5 w-3.5'
  return (
    <section className="flex min-w-0 flex-1 flex-col border-l-2 border-[#7e8b99] bg-[#a4bfd9]">
      <div className="flex h-[25px] shrink-0 items-center gap-0.5 overflow-hidden">
        <Btn label="펼치기" className="w-[19px]"><svg viewBox="0 0 12 12" className="h-3 w-3" fill="none" stroke="#444"><path d="M2 3l3 3-3 3M7 3l3 3-3 3" /></svg></Btn>
        <Btn className="w-[19px] text-[13px]">간</Btn>
        <Btn label="환경설정" className="w-[19px]">
          <svg viewBox="0 0 14 14" className={icon} fill="none" stroke="#444"><circle cx="7" cy="7" r="3" strokeWidth="2.4" /><path d="M7 1v2M7 11v2M1 7h2M11 7h2M3 3l1 1M10 10l1 1M11 3l-1 1M4 10l-1 1" strokeWidth="2" /></svg>
        </Btn>
        <Btn label="알람" className="w-[19px]">
          <svg viewBox="0 0 14 14" className={icon} fill="none" stroke="#444"><circle cx="7" cy="7.500" r="4.500" /><path d="M7 4v4h3M1 4l3-3M13 4l-3-3M3 13l1-2M11 13l-1-2" /></svg>
        </Btn>
        <Btn label="새로고침" className="w-[19px]">
          <svg viewBox="0 0 14 14" className={icon} fill="none" stroke="#444"><rect x="1" y="1" width="12" height="12" rx="2" /><path d="M9 9h1.500V5H4l2-2M4 5l2 2M5 9H3.500V7M8 9l2 2" /></svg>
        </Btn>
        <Btn label="위로" className="w-[19px]"><svg viewBox="0 0 14 14" className={icon} fill="none" stroke="#444"><path d="M7 3l5 5H2zM1 10.500h12" /></svg></Btn>
        <Btn label="아래로" className="w-[19px]"><svg viewBox="0 0 14 14" className={icon} fill="none" stroke="#444"><path d="M7 11l5-5H2zM1 3.500h12" /></svg></Btn>
        <span className="h-5 w-6 shrink-0 border border-[#8a93a5] bg-white" />
      </div>
      <div className="min-h-0 flex-1 overflow-hidden border border-r-0 border-[#59636f] bg-white">
        <table className="w-full table-fixed border-collapse text-[13px]">
          <thead>
            <tr className="h-[17px] bg-[#e6effa] text-[#333]">
              <th className="w-[19px] border-r border-b border-[#9aa0ac] p-0">
                <input type="checkbox" aria-label="전체 선택" className="mx-auto block h-3 w-3 appearance-none border border-black bg-white" />
              </th>
              <th className="w-4 border-r border-b border-[#9aa0ac] p-0 leading-none font-normal">뉴</th>
              <th className="border-r border-b border-[#9aa0ac] p-0 leading-none font-normal">종목명</th>
              <th className="w-3 border-b border-[#9aa0ac] p-0" />
            </tr>
          </thead>
          <tbody>
            {Array.from({ length: 26 }, (_, i) => (
              <tr key={i} className="h-[34px] even:bg-[#f3f3f3]">
                <td className="border-r border-[#9aa0ac]" />
                <td className="border-r border-[#9aa0ac]" />
                <td className="border-r border-[#9aa0ac]" />
                <td />
              </tr>
            ))}
          </tbody>
        </table>
      </div>
      <div className="flex h-4 shrink-0 border-b border-[#59636f] bg-[#f4f3f1]">
        <button type="button" aria-label="왼쪽으로" className="flex w-5 items-center justify-center border-r-2 border-[#777] bg-[#ece9e6]"><Tri dir="left" /></button>
        <span className="w-5 border-r-2 border-[#777] bg-[#ece9e6]" />
        <button type="button" aria-label="오른쪽으로" className="ml-auto flex w-5 items-center justify-center border-r-2 border-[#777] bg-[#ece9e6]"><Tri dir="right" /></button>
      </div>
    </section>
  )
}

function Toolbar() {
  const ic = 'h-4 w-4'
  return (
    <div className="flex h-6 shrink-0 items-center gap-0.5 overflow-hidden border-b border-black bg-[#a4bfd9] pl-px text-[13px]">
      <Btn label="접기" className="w-2"><Tri dir="left" /></Btn>
      <Sep />
      <Combo label="종목코드" value="200230" className="w-[78px]" />
      <Btn label="종목 찾기">
        <svg viewBox="0 0 16 16" className={ic} fill="none" stroke="#555"><circle cx="6" cy="6" r="4" strokeWidth="1.500" /><path d="M9 9l5 5" strokeWidth="2.500" /></svg>
      </Btn>
      <Btn label="종목 찾기 해제">
        <svg viewBox="0 0 16 16" className={ic} fill="none" stroke="#555"><circle cx="6" cy="6" r="4" strokeWidth="1.500" /><path d="M6 10l4-3v2h5l-1 2 1 2h-5v2z" fill="#e00" stroke="#e00" /></svg>
      </Btn>
      <Sep />
      <button type="button" className="flex h-5 w-5 shrink-0 items-center justify-center rounded-sm border border-[#e08080] bg-linear-to-b from-[#ffe0e0] to-[#ffb0b0] leading-none">일</button>
      <Btn>주</Btn>
      <Btn>월</Btn>
      <Btn>분</Btn>
      <Combo label="분 단위" value="5" className="w-11" />
      <Btn>틱</Btn>
      <Combo label="틱 단위" value="10" className="w-[54px]" />
      <Sep />
      <Combo label="건수" value="건수" className="w-[49px]" disabled />
      <input aria-label="봉 개수" defaultValue="5000" className="h-5 w-16 shrink-0 border border-[#8a93a5] bg-white pr-px text-right outline-none" />
      <span className="w-3 shrink-0">바</span>
      <Sep />
      <Btn label="추세선">
        <svg viewBox="0 0 16 16" className={ic} fill="none" strokeWidth="2"><path d="M1 7l3 2h5l5-5" stroke="#444" /><path d="M1 11l3 2 4-3 3-1 4-4" stroke="#e00" /></svg>
      </Btn>
      <Btn label="신호">
        <svg viewBox="0 0 16 16" className={ic} strokeWidth="2"><path d="M3 8v6M7 5v8M10 3v9M14 1v10" stroke="#444" /><path d="M3 4v2M7 1v2M10 14v2M14 13v2" stroke="#e00" /></svg>
      </Btn>
      <Btn label="봉차트"><svg viewBox="0 0 16 16" className={ic} stroke="#555" strokeWidth="2"><path d="M3 8v6M7 5v8M10 4v8M14 1v10" /></svg></Btn>
      <Btn label="위아래"><svg viewBox="0 0 16 16" className={ic} fill="#444"><path d="M4 1l4 5H5.500v6h-3V6H0z" /><path d="M12 15l3-4h-2V5h-2v6H9z" fill="#fff" stroke="#444" /></svg></Btn>
      <Sep />
      <Btn label="문서"><svg viewBox="0 0 16 16" className={ic} fill="none" stroke="#555" strokeWidth="1.500"><path d="M8 13H2V1h6l3 3v3M8 1v3h3M9 8v6h3c3 0 3-6 0-6z" /></svg></Btn>
      <Btn label="방송" disabled><svg viewBox="0 0 16 16" className={ic} fill="none" stroke="#aaa" strokeWidth="1.500"><path d="M2 5h12v8H2zM5 1l3 3 3-3M5 8h5v3H5zM8 9l5 5" /></svg></Btn>
      <Sep />
      <Btn label="차트 유형"><svg viewBox="0 0 16 16" className={ic} fill="none" stroke="#555"><path d="M2 1h9l3 3v11H2z" fill="#fff" /><path d="M5.500 4v9" stroke="#1a4fd0" strokeWidth="2.500" /><path d="M8 9l1-3 2 6 1-4" stroke="#e00" /></svg></Btn>
      <Btn label="데이터 표"><svg viewBox="0 0 16 16" className={ic} fill="none" stroke="#444"><path d="M1.500 1.500h11v10h-11zM5.500 1v11M9.500 1v11M1 5.500h12M1 8.500h12" /><path d="M15 11v4h-4z" fill="#e00" stroke="#e00" /></svg></Btn>
      <Btn className="w-8" disabled>개별</Btn>
      <Sep />
      <button type="button" className="ml-px h-5 w-[46px] shrink-0 rounded-sm border border-[#8a8fc0] bg-linear-to-b from-white to-[#c8caf0] leading-none">업로드</button>
    </div>
  )
}

const R = '#e00000'
const B = '#1414b4'

// drawing tools, top to bottom
const TOOLS: [string, ReactNode][] = [
  ['새로고침', <><path d="M16 0v16H0z" fill="#999" /><path d="M8 2C4 2 3 5 5 8M8 14c4 0 5-3 3-6" stroke={B} strokeWidth="2" /><path d="M2 6h6L5 10zM8 10h6l-3-4z" fill={B} /></>],
  ['종목 연동', <><path d="M2 1h4v14H2zM10 1h4v14h-4zM2 5h12M2 11h12" stroke="#2a2ad0" /><path d="M6 3h4M6 13h4M7 2v2M9 12v2M4 7v2M12 7v2" stroke={R} strokeWidth="2" /></>],
  ['선택', <path d="M4 1v12l3-3 2 5 2-1-2-5h4z" fill={B} />],
  ['변경', <path d="M7 2H3v4h4M14 2L2 14M10 9h4v3h-4zM10 9v6" stroke="#fff" strokeWidth="2" />],
  ['선택 삭제', <><path d="M5 10l4-4h5l-4 4zM5 10h5v4H5zM10 14l4-4V6" stroke="#2a2ad0" /><path d="M2 3l3 3 4-5" stroke={R} strokeWidth="2" /></>],
  ['전체 삭제', <><path d="M5 11l4-4h5l-4 4zM5 11h5v3H5zM10 14l4-4V7" stroke="#2a2ad0" /><path d="M1 6V2h3v4M1 4h3M6 1v5M8 1v5" stroke={R} /></>],
  ['수직 기준', <><path d="M1.500 1v13.500H15" stroke="#2a2ad0" /><path d="M3 8l2-3 3 2M9 9l2 3 4-5" stroke="#000" /><path d="M7.500 1v11" stroke={R} strokeWidth="2" /></>],
  ['가로선', <><path d="M3 8h10" stroke={B} /><path d="M1 6h4v4H1zM11 6h4v4h-4z" fill={R} /></>],
  ['세로선', <><path d="M8 3v10" stroke={B} /><path d="M6 1h4v4H6zM6 11h4v4H6z" fill={R} /></>],
  ['구간', <><path d="M3.500 12v2.500h8V8" stroke={B} /><path d="M4.500 2v4" stroke={B} /><path d="M3 5h3v5H3z" fill={B} /><path d="M12.500 0v7" stroke={R} /><path d="M11 1h3v3h-3z" fill={R} /></>],
  ['추세선', <><path d="M3 13L13 3" stroke={B} /><path d="M1 11h4v4H1zM11 1h4v4h-4z" fill={R} /></>],
  ['각도', <><path d="M2 14L14 2" stroke={B} /><path d="M1 7l2-6 2 6M2 5h3M8 9h6M11 9v6" stroke={R} strokeWidth="2" /></>],
  ['분할선', <><path d="M2 2.500h12M3 4.500h11M5 6.500h9" stroke={R} /><path d="M6 9.500h8M5 11.500h9M3 14.500h11" stroke="#00f" /></>],
  ['피보나치 선', <><path d="M4 8V2h2M2 4h4M10 1v6h4M9 1L6 8" stroke={R} /><path d="M3.500 9v6M6.500 9v6M10.500 9v6M13.500 9v6" stroke={B} /></>],
  ['피보나치 팬', <><path d="M3 7V2h2M2 4h4M11 7V2h2M10 4h4" stroke={R} /><path d="M9 1L2 15l8-6-3 6 6-4M5 12h9" stroke={B} /></>],
  ['피보나치 아크', <><path d="M4 7V1h2M2 4h4M11 2h3v4h-3z" stroke={R} /><path d="M2 14c2-9 10-9 12 0M5 14c1-5 5-5 6 0M8 2v3L2 13M8 8l6 6" stroke={B} /></>],
  ['되돌림', <><path d="M4 8V2h2M2 4h4M10 8V2h3v3h-3l4 3M8 1L6 8" stroke={R} /><path d="M2 10.500h12M2 13.500h12" stroke={B} strokeDasharray="3 1" /></>],
  ['평행선', <path d="M2 11L10 2M3 14L14 3M8 14l6-6" stroke={B} />],
  ['엘리어트', <><path d="M2 13l4-4 4 3 4-5" stroke={B} /><path d="M2 1v5M2 1h4M2 4h3M2 6h4M2 12h2M9 11h2" stroke={R} strokeWidth="1.5" /></>],
  ['엘리어트 파동', <><path d="M2 13l4-4 4 3 4-5" stroke={B} /><path d="M2 1v5M2 1h4M2 4h3M2 6h4M5 10h3M2 13h2" stroke={R} strokeWidth="1.5" /></>],
  ['직선 회귀', <><path d="M5 13l4-6v6l4-8" stroke={B} /><path d="M2.500 1v5.500H5M6.500 8v6M10.500 6v6M14.500 3v6" stroke={R} /></>],
  ['D 채널', <><path d="M3 14L8 5v8l4-9v8l3-9" stroke={B} /><path d="M2 1v5h2l1-2-1-3zM6 15l9-12" stroke={R} /></>],
  ['E 채널', <><path d="M3 14L8 5v8l4-9v8l3-9" stroke={B} /><path d="M2 1v5h3M2 1h3M2 3h3M4 12L15 5" stroke={R} /></>],
  ['R 채널', <><path d="M2 13L8 5v8l4-9v8l3-9" stroke={B} /><path d="M2 7V1h3v3H2l3 3M5 13L15 3" stroke={R} /></>],
  ['사분위', <><path d="M2 2.500h13M9 6.500h6M9 10.500h6M2 14.500h13" stroke={B} /><path d="M2.500 4.500h4v6h-4zM5 9l2 3" stroke={R} /></>],
  ['문자', <path d="M2 2h12v4h-1L12 4H9v9h2v1H5v-1h2V4H4L3 6H2z" fill="#2a2ad0" />],
  ['위 화살표', <path d="M8 1l6 7h-3v6H5V8H2z" fill="#2a2ad0" />],
  ['아래 화살표', <path d="M8 15l6-7h-3V2H5v6H2z" fill="#2a2ad0" />],
  ['사각형', <><path d="M1.500 1.500h13v13h-13z" stroke="#2a2ad0" /><path d="M4 4h8v8H4z" fill="#f06060" /></>],
  ['원', <><circle cx="8" cy="8" r="6.500" stroke="#2a2ad0" /><circle cx="8" cy="8" r="4" fill="#f06060" /></>],
  ['이모티콘', <><circle cx="8" cy="8" r="6.500" stroke="#2a2ad0" /><path d="M5 5h1v2M10 5h1v2M4 9l2 3h4l2-3" stroke="#2a2ad0" /></>],
  ['번호', <><circle cx="8" cy="8" r="6.500" stroke="#2a2ad0" /><path d="M6 6l2-2v8" stroke="#2a2ad0" /></>],
]

function DrawingTools() {
  return (
    <aside className="flex w-[26px] shrink-0 flex-col items-start gap-[7px] border-l border-white bg-[#a4bfd9] pt-[3px] pl-[3px]">
      {TOOLS.map(([name, art], i) => (
        <button
          key={name}
          type="button"
          aria-label={name}
          disabled={i === 3}
          className={`flex h-[18px] w-[18px] shrink-0 items-center justify-center border border-[#777] ${i === 3 ? 'bg-[#b4b8bc]' : 'bg-[#f0f0f0]'} ${i === 2 ? 'ring-2 ring-white' : ''}`}
        >
          <svg viewBox="0 0 16 16" className="h-4 w-4" fill="none">{art}</svg>
        </button>
      ))}
    </aside>
  )
}

const NAV_BTN = 'flex h-full shrink-0 items-center justify-center border-r border-[#6e88a4] bg-[#a4bfd9]'

function RangeBar() {
  return (
    <div className="flex h-[25px] shrink-0 border-b-2 border-[#d8e4f0] bg-[#a4bfd9]">
      <div className="flex w-[35px] shrink-0 flex-col items-center justify-center gap-1 border-r border-white">
        <span className="h-1 w-7 border border-white bg-[#8aa9c6]" />
        <span className="h-1 w-7 border border-white bg-[#8aa9c6]" />
      </div>
      <button type="button" aria-label="이전" className={`${NAV_BTN} w-[21px]`}><Tri dir="left" /></button>
      <svg viewBox="466 941 1203 23" preserveAspectRatio="none" className="h-full min-w-0 flex-1 bg-[#c0c0c0]" shapeRendering="crispEdges">
        <path d="M936 941h550v23H936z" fill="#626262" />
        <path d="M466 964V958h18l8-1h32l43 2 48 1 4 2h51l6-2 29-3 16-2 12-4 8-3 8-4 6 2 6 2h16l7-2 3 10 3-2 4-11 4 5 8 1 4 3 6-3h16v16l60 1v-1z" fill="#505050" />
        <path d="M960 964l20-1h80l13-2 9-4 41 1 21-1 36 2 18 3h30l20-2h36l7 2 103 1z" fill="#2c2c2c" />
        <path d="M1486 964v-1h50v-1h90v1h24v1z" fill="#505050" />
        <g fill="#000" stroke="#fff"><rect x="933.5" y="942.500" width="3" height="20" /><rect x="1484.5" y="942.500" width="3" height="20" /></g>
      </svg>
      <button type="button" aria-label="재생" className={`${NAV_BTN} w-5`}><Tri dir="right" /></button>
      <button type="button" aria-label="빠르게 뒤로" className={`${NAV_BTN} w-[19px]`}><Tri dir="left" /><Tri dir="left" /></button>
      <button type="button" aria-label="빠르게 앞으로" className={`${NAV_BTN} w-[18px]`}><Tri dir="right" /><Tri dir="right" /></button>
      <input aria-label="표시 봉 수" defaultValue="670" className="h-full w-[52px] shrink-0 border border-[#777] bg-white pr-1 text-right font-['Noto_Sans',sans-serif] text-[13px] outline-none" />
      <div className="flex w-[110px] shrink-0 items-center justify-around">
        <button type="button" aria-label="간격 넓게"><svg viewBox="0 0 12 12" className="h-3 w-3"><path d="M5 0v12L0 6zM7 0v12l5-6z" /></svg></button>
        <button type="button" aria-label="간격 좁게"><svg viewBox="0 0 12 12" className="h-3 w-3"><path d="M0 0v12l6-6zM12 0v12L6 6z" /></svg></button>
        <button type="button" aria-label="확대"><svg viewBox="0 0 12 12" className="h-3 w-3" fill="#fff" stroke="#000"><circle cx="6" cy="6" r="5" /><path d="M3 6h6M6 3v6" /></svg></button>
        <button type="button" aria-label="축소" disabled><svg viewBox="0 0 12 12" className="h-3 w-3" fill="none" stroke="#dce6f0"><circle cx="6" cy="6" r="5" /><path d="M3 6h6" /></svg></button>
        <button type="button" aria-label="전체" disabled><svg viewBox="0 0 12 12" className="h-3 w-3" fill="none" stroke="#dce6f0"><path d="M.5.5h11v11H.5zM3 3l6 6M9 3L3 9" /></svg></button>
        <button type="button" aria-label="닫기"><svg viewBox="0 0 12 12" className="h-3 w-3" fill="#fff" stroke="#000"><path d="M.5.5h11v11H.5zM2 2l8 8M10 2l-8 8" /></svg></button>
      </div>
    </div>
  )
}

export default function App() {
  return (
    <div className={`flex h-screen overflow-hidden bg-[#1b3a66] text-black ${FONT}`}>
      {/* Signal search window */}
      <div className="flex w-[407px] shrink-0 flex-col pt-0.5">
        <header className="flex h-[19px] shrink-0 items-stretch justify-between border-b border-black bg-[#d3d3d3] pr-1">
          <div className="relative flex w-[148px] items-center">
            <svg viewBox="0 0 148 19" className="absolute inset-0 h-full w-full" preserveAspectRatio="none"><path d="M.5 19V3l2-2h134q3 0 5 4l6 14" fill="#fff" stroke="#000" /></svg>
            <h1 className="relative flex items-center gap-1.5 pl-1.5 text-[13px] leading-4 whitespace-nowrap">
              [3201] 종목검색 <LinkIcon color="#444" />
              <svg viewBox="0 0 10 10" className="h-2.5 w-2.5" stroke="#aaa" strokeWidth="2.5"><path d="M1 1l8 8M9 1L1 9" /></svg>
            </h1>
          </div>
          <WindowButtons />
        </header>
        <div className="flex min-h-0 flex-1 gap-1 bg-[#e8eaec] pr-0.5">
          <SearchPane />
          <ResultPane />
        </div>
        <div className="mt-0.5 h-[7px] shrink-0 border-2 border-b-0 border-[#808080] bg-[#d4d0c8]" />
      </div>

      <div className="w-[3px] shrink-0 border-r border-white bg-[#1b3a66]" />

      {/* Chart window */}
      <div className="flex min-w-0 flex-1 flex-col pb-[3px]">
        <header className="flex h-[19px] shrink-0 items-stretch justify-between border-t border-b border-t-white border-b-black bg-[#d3d3d3] pr-0.5">
          <div className="relative flex w-[200px] items-center">
            <svg viewBox="0 0 200 18" className="absolute inset-0 h-full w-full" preserveAspectRatio="none">
              <defs>
                <linearGradient id="tab" x2="0" y2="1"><stop stopColor="#7090d0" /><stop offset="1" stopColor="#4870bc" /></linearGradient>
              </defs>
              <path d="M0 18V1h188q4 0 6 4l6 13z" fill="url(#tab)" stroke="#223a78" />
            </svg>
            <h1 className="relative flex items-center gap-1.5 pl-1.5 text-[13px] leading-4 whitespace-nowrap text-white">
              [6101] 텔콘RF제약 - 일간 <LinkIcon color="#fff" />
              <svg viewBox="0 0 10 10" className="h-2.5 w-2.5" stroke="#fff" strokeWidth="2.5"><path d="M1 1l8 8M9 1L1 9" /></svg>
            </h1>
          </div>
          <WindowButtons />
        </header>
        <div className="flex min-h-0 flex-1">
          <div className="flex min-w-0 flex-1 flex-col">
            <Toolbar />
            <main className="min-h-0 flex-1 bg-white">
              <Chart />
            </main>
            <RangeBar />
          </div>
          <DrawingTools />
        </div>
      </div>
    </div>
  )
}
